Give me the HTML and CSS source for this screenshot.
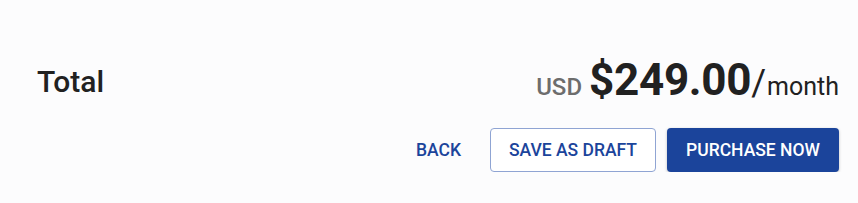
FILE: index.html
```html
<!DOCTYPE html>
<html lang="en">
<head>
    <meta charset="UTF-8">
    <meta name="viewport" content="width=device-width, initial-scale=1.0">
    <title>Checkout total</title>
    <link rel="stylesheet" href="styles.css">
</head>
<body>
    <div class="summary">
        <div class="total-row">
            <span class="total-label">Total</span>
            <div class="price">
                <span class="currency">USD</span>
                <span class="amount">$249.00</span><span class="period">/<span class="period-unit">month</span></span>
            </div>
        </div>
        <div class="actions">
            <button class="btn btn-text">Back</button>
            <button class="btn btn-outline">Save as draft</button>
            <button class="btn btn-primary">Purchase now</button>
        </div>
    </div>
</body>
</html>
```

FILE: styles.css
```css
body {
    font-family: Roboto, "Liberation Sans", sans-serif;
    margin: 0;
    padding: 0;
    background-color: #fcfcfd;
    color: #212121;
}

.summary {
    padding: 54px 19px 0 37px;
}

.total-row {
    display: flex;
    justify-content: space-between;
    height: 56px;
}

.total-label {
    font-size: 30px;
    font-weight: 500;
    line-height: 1.172;
    margin-top: 10px;
}

.price {
    display: flex;
    align-items: baseline;
    align-self: flex-start;
}

.currency {
    font-size: 24px;
    font-weight: 500;
    color: #6d6d6d;
    margin-right: 7px;
}

.amount {
    font-size: 44px;
    font-weight: 700;
    letter-spacing: -0.3px;
}

.period {
    font-size: 36px;
    font-weight: 400;
}

.period-unit {
    font-size: 25px;
    margin-left: 1px;
}

.actions {
    display: flex;
    justify-content: flex-end;
    margin-top: 18px;
}

.btn {
    font-family: inherit;
    font-size: 17.5px;
    font-weight: 500;
    text-transform: uppercase;
    height: 44px;
    padding: 0 18px;
    border-radius: 4px;
    border: 1px solid transparent;
    background: none;
    cursor: pointer;
}

.btn-text {
    color: #1b449b;
    padding: 0 16px;
}

.btn-outline {
    color: #1b449b;
    border-color: #8fa4d3;
    background-color: #ffffff;
    margin-left: 12px;
}

.btn-primary {
    color: #ffffff;
    background-color: #1b449b;
    margin-left: 11px;
    box-shadow: 0 1px 3px rgba(0, 0, 0, 0.25);
}
```
